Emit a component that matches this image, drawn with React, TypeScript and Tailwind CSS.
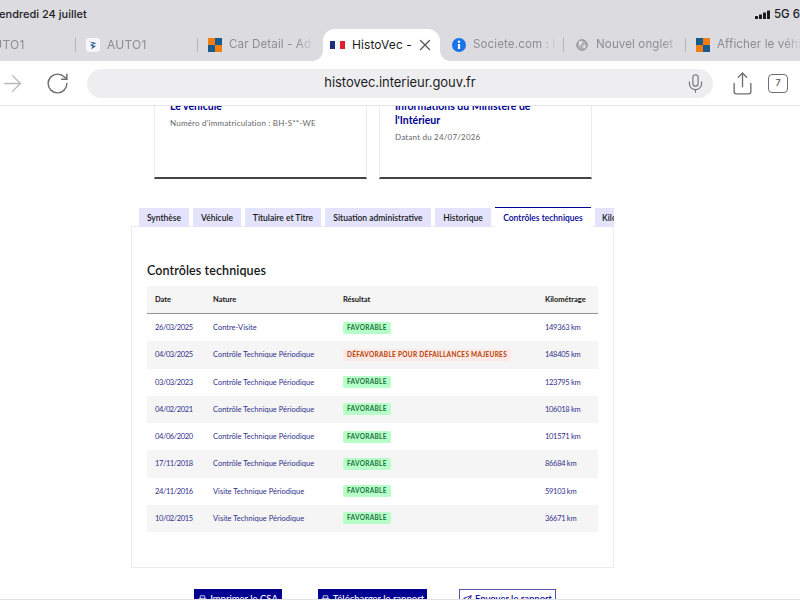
import { ArrowRight, RotateCw, X, Mic, Share, Printer, Send } from "lucide-react";

const rows = [
  ["26/03/2025", "Contre-Visite", "FAVORABLE", "149363 km"],
  ["04/03/2025", "Contrôle Technique Périodique", "DÉFAVORABLE POUR DÉFAILLANCES MAJEURES", "148405 km"],
  ["03/03/2023", "Contrôle Technique Périodique", "FAVORABLE", "123795 km"],
  ["04/02/2021", "Contrôle Technique Périodique", "FAVORABLE", "106018 km"],
  ["04/06/2020", "Contrôle Technique Périodique", "FAVORABLE", "101571 km"],
  ["17/11/2018", "Contrôle Technique Périodique", "FAVORABLE", "86684 km"],
  ["24/11/2016", "Visite Technique Périodique", "FAVORABLE", "59103 km"],
  ["10/02/2015", "Visite Technique Périodique", "FAVORABLE", "36671 km"],
];

const Checker = ({ flip }: { flip?: boolean }) => (
  <svg width="14" height="14" viewBox="0 0 14 14" className="shrink-0">
    <rect width="14" height="14" fill="#f07c12" />
    <rect x={flip ? 0 : 7} y="0" width="7" height="7" fill="#175a8c" />
    <rect x={flip ? 7 : 0} y="7" width="7" height="7" fill="#175a8c" />
  </svg>
);

const Tab = ({ icon, label, sep = true, caps, shift }: { icon?: React.ReactNode; label: string; sep?: boolean; caps?: boolean; shift?: boolean }) => (
  <div className={`w-[122px] shrink-0 h-full flex items-center relative gap-[7px] ${shift ? "pl-[11px]" : "pl-[10px]"}`}>
    <span className="w-[14px] h-[14px] shrink-0 flex items-center justify-center">{icon}</span>
    <span
      className={`text-[#8d8d92] whitespace-nowrap overflow-hidden flex-1 [mask-image:linear-gradient(90deg,#000_80%,transparent_100%)] mr-[6px] ${
        caps ? "text-[12px] tracking-[0.25px]" : "text-[11.6px] tracking-[0.1px]"
      }`}
    >
      {label}
    </span>
    {sep && <span className="absolute right-0 top-[9px] h-[14px] w-[1.5px] bg-[#b4b4b9]" />}
  </div>
);

const tabs = [
  ["Synthèse", "w-[50px]"],
  ["Véhicule", "w-[48px]"],
  ["Titulaire et Titre", "w-[76px]"],
  ["Situation administrative", "w-[106px]"],
  ["Historique", "w-[56px]"],
];

const Badge = ({ text }: { text: string }) => {
  const ok = text === "FAVORABLE";
  return (
    <span
      className={`block w-fit rounded-[2px] px-[4px] h-[12px] leading-[12px] text-[6.5px] font-bold tracking-[0.3px] whitespace-nowrap ${
        ok ? "bg-[#b8fec9] text-[#18753c]" : "bg-[#ffe9e6] text-[#b34000]"
      }`}
    >
      {text}
    </span>
  );
};

const Card = ({ w, title, sub }: { w: string; title: React.ReactNode; sub: string }) => (
  <div className={`${w} h-[100px] bg-white border-x border-[#ececec] border-b-[2px] border-b-[#444444] px-[15px] pt-[20px]`}>
    <div className="text-[10.5px] leading-[14px] font-bold text-[#000091]">{title}</div>
    <div className="text-[8px] leading-[10px] text-[#666] mt-[5px] tracking-[0.2px]">{sub}</div>
  </div>
);

export default function App() {
  return (
    <div className="w-[800px] h-[600px] overflow-hidden flex flex-col bg-white font-['Lato',sans-serif]">
      <header className="shrink-0 bg-[#dbdbe0] font-['Inter',sans-serif]">
        <div className="h-[29px] flex items-center justify-between relative">
          <span className="text-[11px] font-medium text-[#1c1c1e] -ml-[7px] whitespace-nowrap">vendredi 24 juillet</span>
          <div className="flex items-center gap-[3px] -mr-[2px] text-[#1c1c1e]">
            <svg width="16" height="10" viewBox="0 0 16 10">
              <rect x="0" y="6" width="3" height="3" rx="0.6" fill="#1c1c1e" />
              <rect x="4" y="4.5" width="3" height="4.5" rx="0.6" fill="#1c1c1e" />
              <rect x="8" y="2.5" width="3" height="6.5" rx="0.6" fill="#1c1c1e" />
              <rect x="12" y="0.5" width="3" height="8.5" rx="0.6" fill="#1c1c1e" />
            </svg>
            <span className="text-[11.5px] font-medium whitespace-nowrap w-[28px] overflow-hidden">5G 6</span>
          </div>
        </div>
        <div className="h-[32px] flex -ml-[46px] w-[860px]">
          <Tab label="AUTO1" caps />
          <Tab
            label="AUTO1"
            caps
            icon={
              <svg width="14" height="14" viewBox="0 0 14 14">
                <rect width="14" height="14" rx="3" fill="#f4f6fa" />
                <path d="M3 3.5 L10.5 5 L6 7 L10 8 L5 11.5 L6.5 8.5 L4 7 L7 5.5 Z" fill="#2d5a8e" />
              </svg>
            }
          />
          <Tab label="Car Detail - Ad" sep={false} icon={<Checker />} />
          <div className="ml-[3px] w-[117px] mr-[2px] shrink-0 h-full bg-white rounded-t-[12px] flex items-center pl-[7px] gap-[7px] relative">
            <span className="absolute -left-[10px] bottom-0 w-[10px] h-[10px] bg-[radial-gradient(circle_at_0_0,#dbdbe0_9.5px,#ffffff_10px)]" />
            <span className="absolute -right-[10px] bottom-0 w-[10px] h-[10px] bg-[radial-gradient(circle_at_100%_0,#dbdbe0_9.5px,#ffffff_10px)]" />
            <svg width="15" height="8" viewBox="0 0 15 8" className="shrink-0">
              <rect width="5" height="8" fill="#1d2f7c" />
              <rect x="5" width="5" height="8" fill="#f5f5f5" />
              <rect x="10" width="5" height="8" fill="#e1202f" />
            </svg>
            <span className="text-[12px] text-[#1c1c1e] tracking-[0.1px] whitespace-nowrap">HistoVec -</span>
            <X className="absolute left-[93px] top-[7px] text-[#555]" size={18} strokeWidth={1.6} />
          </div>
          <Tab
            label="Societe.com : L"
            icon={
              <svg width="14" height="14" viewBox="0 0 14 14">
                <circle cx="7" cy="7" r="7" fill="#1a73e8" />
                <circle cx="7" cy="3.8" r="1.2" fill="#fff" />
                <rect x="5.9" y="6" width="2.2" height="5" fill="#fff" />
              </svg>
            }
          />
          <Tab
            label="Nouvel onglet"
            shift
            icon={
              <svg width="12" height="12" viewBox="0 0 12 12">
                <circle cx="6" cy="6" r="5.3" fill="#b0b0b5" stroke="#8f8f94" strokeWidth="1" />
                <path d="M3 2.5 L6 2 L6.5 4 L4.5 5 L5 7 L3 6 Z M7.5 6 L10 6.5 L8.5 9.5 L7 8.5 Z" fill="#e6e6ea" />
              </svg>
            }
          />
          <Tab label="Afficher le véhicule" sep={false} icon={<Checker flip />} />
        </div>
        <div className="h-[45px] bg-white border-b border-[#e3e3e6] flex items-center relative">
          <ArrowRight className="absolute -left-[1px] top-[9px] text-[#b9b9bd]" size={27} strokeWidth={1.2} />
          <RotateCw className="absolute left-[45px] top-[10px] text-[#6e6e72]" size={25} strokeWidth={1.4} />
          <div className="ml-[87px] w-[626px] h-[29px] rounded-full bg-[#eeeef0] flex items-center justify-center relative">
            <span className="text-[13px] text-[#1c1c1e] tracking-[-0.05px]">histovec.interieur.gouv.fr</span>
            <Mic className="absolute right-[7px] top-[4px] text-[#76767a]" size={21} strokeWidth={1.3} />
          </div>
          <Share className="ml-[17px] text-[#6e6e72]" size={25} strokeWidth={1.3} />
          <div className="ml-[13px] w-[20px] h-[19px] border-[1.5px] border-[#6e6e72] rounded-[4px] flex items-center justify-center text-[9px] text-[#555] font-medium">7</div>
        </div>
      </header>

      <main className="flex-1 min-h-0 overflow-hidden relative">
        <div className="-mt-[27px] pl-[154px] flex gap-[12px]">
          <Card w="w-[213px]" title="Le véhicule" sub="Numéro d'immatriculation : BH-S**-WE" />
          <Card w="w-[213px]" title={<>Informations du Ministère de<br />l'Intérieur</>} sub="Datant du 24/07/2026" />
        </div>

        <div className="ml-[131px] w-[483px] mt-[28px] relative">
          <div className="flex gap-[4px] pl-[8px] h-[20px] overflow-hidden relative z-10 font-semibold text-[8.5px] leading-[20px]">
            {tabs.map(([t, w]) => (
              <div key={t} className={`${w} shrink-0 h-[19px] mt-[1px] text-center bg-[#e3e3fd] text-[#161616] whitespace-nowrap`}>
                {t}
              </div>
            ))}
            <div className="w-[96px] shrink-0 h-[20px] text-center bg-white border-t border-[#000091] text-[#000091] whitespace-nowrap">
              Contrôles techniques
            </div>
            <div className="w-[40px] shrink-0 h-[19px] mt-[1px] pl-[7px] bg-[#e3e3fd] text-[#161616] whitespace-nowrap">Kilométrage</div>
          </div>
          <div className="h-[342px] -mt-[1px] border border-[#ececec] bg-white px-[15px] pt-[35px]">
            <h2 className="text-[12.5px] leading-[18px] font-semibold text-[#161616] tracking-[0.1px]">Contrôles techniques</h2>
            <div className="mt-[6px] text-[7.5px]">
              <div className="grid grid-cols-[58px_130px_202px_1fr] items-center h-[28px] bg-[#f5f5f5] border-b border-[#929292] pl-[8px] font-bold text-[#161616]">
                <span>Date</span>
                <span>Nature</span>
                <span>Résultat</span>
                <span>Kilométrage</span>
              </div>
              {rows.map((r, i) => (
                <div
                  key={r[0]}
                  className={`grid grid-cols-[58px_130px_202px_1fr] items-center h-[27.25px] pl-[8px] text-[#30308a] ${i % 2 ? "bg-[#f5f5f5]" : "bg-white"}`}
                >
                  <span className="tracking-[-0.4px]">{r[0]}</span>
                  <span>{r[1]}</span>
                  <Badge text={r[2]} />
                  <span className="tracking-[-0.3px]">{r[3]}</span>
                </div>
              ))}
            </div>
          </div>
        </div>

        <div className="flex ml-[194px] mt-[21px] text-[9.5px] font-medium whitespace-nowrap">
          <div className="w-[88px] h-[20px] bg-[#000091] text-white flex items-center justify-center gap-[3px]"><Printer size={9} />Imprimer le CSA</div>
          <div className="ml-[36px] w-[109px] h-[20px] bg-[#000091] text-white flex items-center justify-center gap-[3px]"><Printer size={9} />Télécharger le rapport</div>
          <div className="ml-[32px] w-[97px] h-[20px] bg-white border border-[#5555a8] text-[#000091] flex items-center justify-center gap-[3px]"><Send size={9} />Envoyer le rapport</div>
        </div>
        <div className="absolute left-0 right-0 bottom-0 h-px bg-[#e2e2e6]" />
      </main>
    </div>
  );
}
